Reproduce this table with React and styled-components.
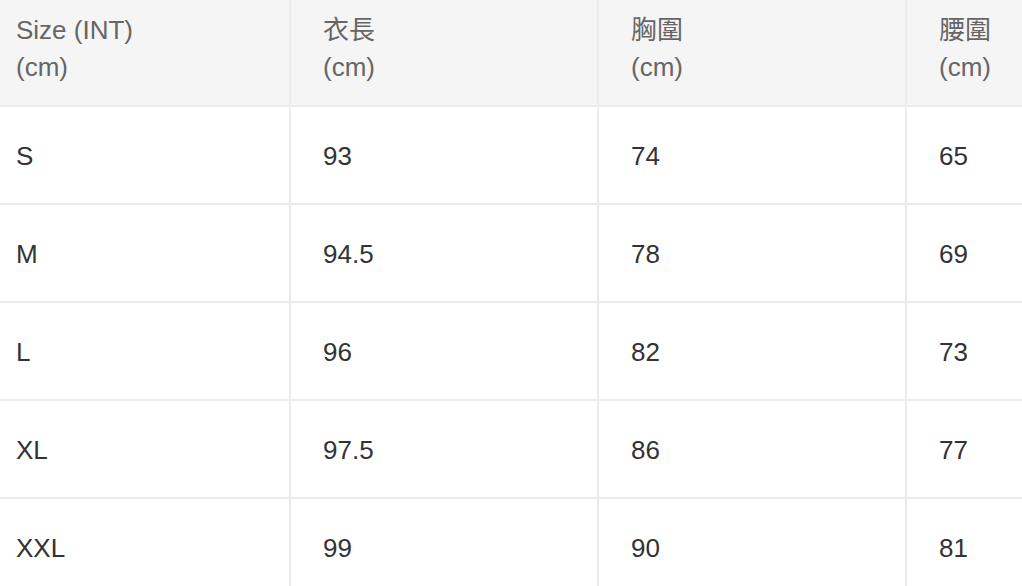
import React from "react";
import styled, { createGlobalStyle } from "styled-components";

const columns = [
  { label: "Size (INT)", width: 290 },
  { label: "衣長", width: 308 },
  { label: "胸圍", width: 308 },
  { label: "腰圍", width: 308 },
];

const rows = [
  ["S", "93", "74", "65"],
  ["M", "94.5", "78", "69"],
  ["L", "96", "82", "73"],
  ["XL", "97.5", "86", "77"],
  ["XXL", "99", "90", "81"],
];

const App = () => {
  return (
    <>
      <GlobalStyle />
      <Wrapper>
        <Table>
          <colgroup>
            {columns.map(({ label, width }) => (
              <col key={label} style={{ width }} />
            ))}
          </colgroup>
          <thead>
            <tr>
              {columns.map(({ label }) => (
                <HeadCell key={label}>
                  {label}
                  <br />
                  (cm)
                </HeadCell>
              ))}
            </tr>
          </thead>
          <tbody>
            {rows.map((row) => (
              <tr key={row[0]}>
                {row.map((value, i) => (
                  <Cell key={i}>{value}</Cell>
                ))}
              </tr>
            ))}
          </tbody>
        </Table>
      </Wrapper>
    </>
  );
};

const GlobalStyle = createGlobalStyle`
  body {
    margin: 0;
    background-color: white;
    overflow: hidden;
    font-family: "Liberation Sans", "Noto Sans CJK TC", Arial, sans-serif;
  }
`;

const Wrapper = styled.div`
  width: 1022px;
  overflow: hidden;
`;

const Table = styled.table`
  border-collapse: collapse;
  table-layout: fixed;
  width: 1214px;

  font-size: 26px;
  line-height: 36.5px;
  text-align: left;
`;

const HeadCell = styled.th`
  background-color: #f5f5f5;
  color: #666666;
  font-weight: 400;

  border-bottom: 2px solid #ececec;
  border-left: 2px solid #ececec;

  height: 106px;
  padding: 12px 16px 0 32px;
  box-sizing: border-box;
  vertical-align: top;

  &:first-child {
    border-left: none;
    padding-left: 16px;
  }
`;

const Cell = styled.td`
  color: #333333;

  border-bottom: 2px solid #ececec;
  border-left: 2px solid #ececec;

  height: 98px;
  padding: 2px 16px 0 32px;
  box-sizing: border-box;
  vertical-align: middle;

  &:first-child {
    border-left: none;
    padding-left: 16px;
  }
`;

export default App;
